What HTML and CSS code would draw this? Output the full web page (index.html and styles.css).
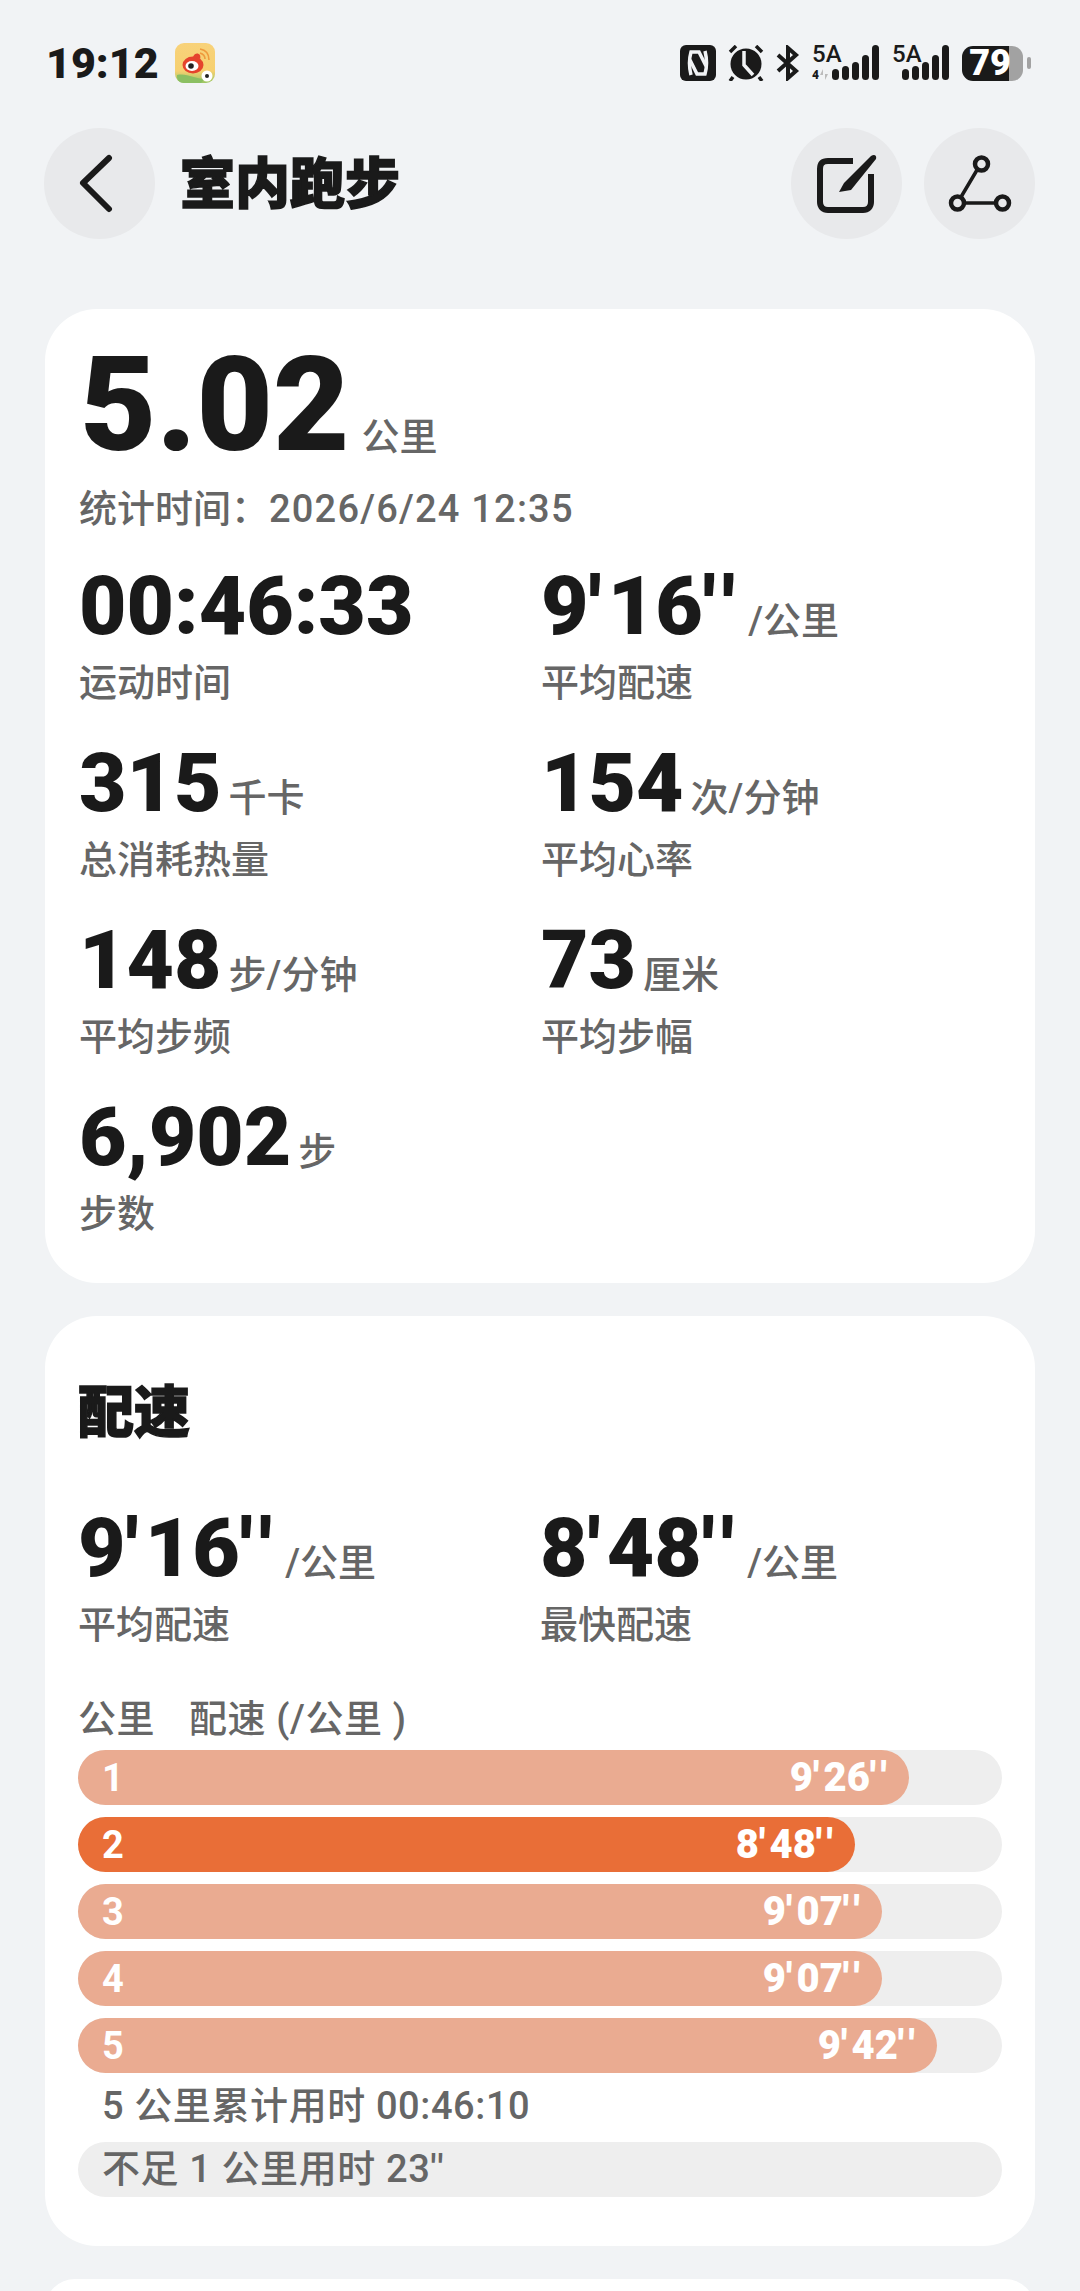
FILE: index.html
```html
<!DOCTYPE html>
<html>
<head>
  <title>室内跑步</title>
  <link rel="stylesheet" href="styles.css">
</head>
<body>

  <div class="status-bar">
    <div class="status-left">
      <span class="clock">19:12</span>
      <svg class="app-icon" width="40" height="40" viewBox="0 0 40 40">
        <defs>
          <linearGradient id="appBg" x1="0" y1="0" x2="0" y2="1">
            <stop offset="0" stop-color="#f8d27a"/>
            <stop offset="0.7" stop-color="#f6d070"/>
            <stop offset="1" stop-color="#9cc765"/>
          </linearGradient>
        </defs>
        <rect width="40" height="40" rx="9" fill="url(#appBg)"/>
        <ellipse cx="18" cy="22" rx="10.5" ry="8.5" fill="#e5432d"/>
        <path d="M18 14 C20 8 27 10 25 16" fill="#e5432d"/>
        <ellipse cx="17" cy="23" rx="6.5" ry="5" fill="#fff"/>
        <circle cx="16" cy="23" r="2.8" fill="#222"/>
        <path d="M25 6 C31 7 34 11 34 17 M25 10 C28 11 30 13 30 16" stroke="#ef9a3c" stroke-width="1.6" fill="none"/>
        <path d="M2 32 C12 30 20 36 30 36 L26 40 H9 C5 40 2 37 2 34 Z" fill="#8bbf62"/>
        <circle cx="32" cy="33" r="5.5" fill="#fff"/>
        <circle cx="32" cy="33" r="2" fill="#222"/>
      </svg>
    </div>
    <div class="status-right">
      <svg width="36" height="36" viewBox="0 0 36 36">
        <rect width="36" height="36" rx="6" fill="#1a1a1a"/>
        <path d="M11 30 C9 22 9 14 11 7 H19 L26 21" stroke="#f1f3f5" stroke-width="3.5" fill="none"/>
        <path d="M25 6 C27 14 27 22 25 29 H17 L10 15" stroke="#f1f3f5" stroke-width="3.5" fill="none"/>
      </svg>
      <svg width="36" height="36" viewBox="0 0 36 36">
        <circle cx="18" cy="19" r="15.5" fill="#1a1a1a"/>
        <path d="M2 7 L8 1 M34 7 L28 1 M5 32 L2 36 M31 32 L34 36" stroke="#1a1a1a" stroke-width="3.5"/>
        <path d="M16 6 V20 L25 30" stroke="#f1f3f5" stroke-width="3.5" fill="none"/>
      </svg>
      <svg width="24" height="36" viewBox="0 0 24 36">
        <path d="M2 10 L20 26 L12 33 V3 L20 10 L2 26" stroke="#1a1a1a" stroke-width="4" fill="none"/>
      </svg>
      <div class="signal">
        <span class="signal-label">5A</span>
        <span class="signal-small">4</span>
        <svg class="signal-arrow" width="8" height="11" viewBox="0 0 8 11">
          <path d="M3 0 L0 6 H3 Z M5 11 L8 5 H5 Z" fill="#bbb"/>
        </svg>
        <svg width="48" height="36" viewBox="0 0 48 36">
          <rect x="0" y="24" width="7" height="11" rx="3.5" fill="#1a1a1a"/>
          <rect x="10" y="21" width="7" height="14" rx="3.5" fill="#1a1a1a"/>
          <rect x="20" y="17" width="7" height="18" rx="3.5" fill="#1a1a1a"/>
          <rect x="30" y="10" width="7" height="25" rx="3.5" fill="#1a1a1a"/>
          <rect x="40" y="0" width="7" height="35" rx="3.5" fill="#1a1a1a"/>
        </svg>
      </div>
      <div class="signal signal-second">
        <span class="signal-label">5A</span>
        <svg width="48" height="36" viewBox="0 0 48 36">
          <rect x="0" y="24" width="7" height="11" rx="3.5" fill="#1a1a1a"/>
          <rect x="10" y="21" width="7" height="14" rx="3.5" fill="#1a1a1a"/>
          <rect x="20" y="17" width="7" height="18" rx="3.5" fill="#1a1a1a"/>
          <rect x="30" y="10" width="7" height="25" rx="3.5" fill="#1a1a1a"/>
          <rect x="40" y="0" width="7" height="35" rx="3.5" fill="#1a1a1a"/>
        </svg>
      </div>
      <div class="battery">
        <div class="battery-body"><span>79</span></div>
        <div class="battery-tip"></div>
      </div>
    </div>
  </div>

  <div class="header">
    <div class="round-btn btn-back">
      <svg width="34" height="60" viewBox="0 0 34 60">
        <path d="M30 4 L4 29 L30 55" stroke="#1a1a1a" stroke-width="6" stroke-linecap="round" stroke-linejoin="round" fill="none"/>
      </svg>
    </div>
    <h1>室内跑步</h1>
    <div class="round-btn">
      <svg width="64" height="60" viewBox="0 0 64 60">
        <path d="M38 7 H13 C7 7 5 10 5 15 V48 C5 53 8 56 13 56 H48 C53 56 56 53 56 48 V20" stroke="#1a1a1a" stroke-width="6" fill="none"/>
        <path d="M29 29 L56 2 C59 0 62 1 61 5 L36 36 L24 38 Z" fill="#1a1a1a"/>
      </svg>
    </div>
    <div class="round-btn">
      <svg width="64" height="60" viewBox="0 0 64 60">
        <circle cx="33.5" cy="10" r="6.5" stroke="#1a1a1a" stroke-width="4.5" fill="none"/>
        <circle cx="9.5" cy="49" r="6.5" stroke="#1a1a1a" stroke-width="4.5" fill="none"/>
        <circle cx="54.5" cy="49" r="6.5" stroke="#1a1a1a" stroke-width="4.5" fill="none"/>
        <path d="M29 16 L13 43 M17 49 H47" stroke="#1a1a1a" stroke-width="3.5" fill="none"/>
      </svg>
    </div>
  </div>

  <div class="card card-summary">
    <div class="total"><span class="total-num">5.02</span><span class="unit total-unit">公里</span></div>
    <div class="label stat-time">统计时间：<span class="date">2026/6/24 12:35</span></div>
    <div class="stats">
      <div class="stat">
        <div class="value"><span class="num">00:46:33</span></div>
        <div class="label">运动时间</div>
      </div>
      <div class="stat">
        <div class="value"><span class="num">9<span class="mark">'</span>16<span class="mark">''</span></span><span class="unit">/公里</span></div>
        <div class="label">平均配速</div>
      </div>
      <div class="stat">
        <div class="value"><span class="num">315</span><span class="unit">千卡</span></div>
        <div class="label">总消耗热量</div>
      </div>
      <div class="stat">
        <div class="value"><span class="num">154</span><span class="unit">次/分钟</span></div>
        <div class="label">平均心率</div>
      </div>
      <div class="stat">
        <div class="value"><span class="num">148</span><span class="unit">步/分钟</span></div>
        <div class="label">平均步频</div>
      </div>
      <div class="stat">
        <div class="value"><span class="num">73</span><span class="unit">厘米</span></div>
        <div class="label">平均步幅</div>
      </div>
      <div class="stat">
        <div class="value"><span class="num">6,902</span><span class="unit">步</span></div>
        <div class="label">步数</div>
      </div>
    </div>
  </div>

  <div class="card card-pace">
    <h2>配速</h2>
    <div class="stats">
      <div class="stat">
        <div class="value"><span class="num">9<span class="mark">'</span>16<span class="mark">''</span></span><span class="unit">/公里</span></div>
        <div class="label">平均配速</div>
      </div>
      <div class="stat">
        <div class="value"><span class="num">8<span class="mark">'</span>48<span class="mark">''</span></span><span class="unit">/公里</span></div>
        <div class="label">最快配速</div>
      </div>
    </div>
    <div class="label wide table-head"><span class="col-km">公里</span>配速 (/公里 )</div>
    <div class="bars">
      <div class="bar"><div class="fill" style="width: 831px"><span class="km">1</span><span>9<span class="mark">'</span>26<span class="mark">''</span></span></div></div>
      <div class="bar"><div class="fill fastest" style="width: 777px"><span class="km">2</span><span>8<span class="mark">'</span>48<span class="mark">''</span></span></div></div>
      <div class="bar"><div class="fill" style="width: 804px"><span class="km">3</span><span>9<span class="mark">'</span>07<span class="mark">''</span></span></div></div>
      <div class="bar"><div class="fill" style="width: 804px"><span class="km">4</span><span>9<span class="mark">'</span>07<span class="mark">''</span></span></div></div>
      <div class="bar"><div class="fill" style="width: 859px"><span class="km">5</span><span>9<span class="mark">'</span>42<span class="mark">''</span></span></div></div>
    </div>
    <div class="label wide total-time">5 公里累计用时 00:46:10</div>
    <div class="label wide rest-time">不足 1 公里用时 23''</div>
  </div>

  <div class="card card-next"></div>

</body>
</html>
```

FILE: styles.css
```css
html, body {
  margin: 0;
  height: 2291px;
  overflow: hidden;
}

body {
  background: #f1f3f5;
  color: #1a1a1a;
  font-family: Roboto, "Noto Sans CJK SC", sans-serif;
}

/* Status bar */
.status-bar {
  display: flex;
  justify-content: space-between;
  align-items: center;
  height: 40px;
  padding: 43px 49px 0 46px;
}

.status-left {
  display: flex;
  align-items: center;
  gap: 16px;
}

.clock {
  font-size: 43px;
  font-weight: 900;
  line-height: 40px;
}

.status-right {
  display: flex;
  align-items: center;
  gap: 12px;
}

.signal {
  position: relative;
  display: flex;
  align-items: flex-end;
  justify-content: flex-end;
  width: 68px;
  height: 36px;
}

.signal-second {
  width: 58px;
}

.signal-label {
  position: absolute;
  left: 0;
  top: -3px;
  font-size: 24px;
  font-weight: 500;
  line-height: 24px;
}

.signal-small {
  position: absolute;
  left: 0;
  bottom: 0;
  font-size: 12px;
  font-weight: 900;
  line-height: 12px;
}

.signal-arrow {
  position: absolute;
  left: 8px;
  bottom: 1px;
}

.battery {
  display: flex;
  align-items: center;
  gap: 4px;
}

.battery-body {
  width: 61px;
  height: 35px;
  border-radius: 11px;
  background: linear-gradient(to right, #1a1a1a 77%, #a2a2a2 77%);
  color: #fff;
  font-size: 36px;
  font-weight: 900;
  line-height: 35px;
  text-align: center;
}

.battery-body span {
  margin-right: 5px;
}

.battery-tip {
  width: 4px;
  height: 12px;
  border-radius: 2px;
  background: #a2a2a2;
}

/* Header */
.header {
  display: flex;
  align-items: center;
  height: 111px;
  margin-top: 45px;
  padding: 0 45px 0 44px;
}

.round-btn {
  display: flex;
  justify-content: center;
  align-items: center;
  width: 111px;
  height: 111px;
  margin-left: 22px;
  border-radius: 50%;
  background: #e8e9eb;
  flex-shrink: 0;
}

.btn-back {
  margin-left: 0;
  padding-right: 8px;
  box-sizing: border-box;
}

.header h1 {
  flex: 1;
  margin: 0 0 0 25px;
  font-size: 55px;
  font-weight: 900;
  line-height: 60px;
  -webkit-text-stroke: 1.5px #1a1a1a;
}

/* Cards */
.card {
  margin: 0 45px;
  background: white;
  border-radius: 52px;
}

.card-summary {
  height: 974px;
  margin-top: 70px;
  padding: 0 34px;
}

.card-pace {
  height: 930px;
  margin-top: 33px;
  padding: 0 33px;
}

.card-next {
  height: 60px;
  margin-top: 33px;
}

.total {
  display: flex;
  align-items: baseline;
  height: 128px;
  padding-top: 32px;
}

.total-num {
  margin-left: 1px;
  font-size: 132px;
  font-weight: 900;
  line-height: 128px;
}

.unit {
  margin-left: 7px;
  color: #666;
  font-size: 38px;
  font-weight: 500;
}

.total-unit {
  margin-left: 12px;
}

.label {
  color: #666;
  font-size: 38px;
  font-weight: 500;
  line-height: 48px;
}

.wide {
  font-kerning: none;
  letter-spacing: 0.6px;
}

.date {
  letter-spacing: 1.2px;
}

.stat-time {
  margin-top: 16px;
}

.stats {
  display: grid;
  grid-template-columns: 462px 1fr;
  row-gap: 33px;
  margin-top: 30px;
}

.value {
  display: flex;
  align-items: baseline;
  height: 86px;
}

.num {
  font-size: 82px;
  font-weight: 900;
  line-height: 86px;
  font-kerning: none;
}

.mark {
  letter-spacing: 0.08em;
}

.stat .label {
  margin-top: 10px;
}

/* Pace */
.card-pace h2 {
  margin: 0;
  padding-top: 62px;
  font-size: 56px;
  font-weight: 900;
  line-height: 70px;
  -webkit-text-stroke: 1.5px #1a1a1a;
}

.card-pace .stats {
  margin-top: 57px;
}

.table-head {
  margin-top: 46px;
}

.col-km {
  display: inline-block;
  width: 111px;
}

.bars {
  display: flex;
  flex-direction: column;
  gap: 12px;
  margin-top: 7px;
}

.bar {
  height: 55px;
  border-radius: 28px;
  background: #eeeeee;
}

.fill {
  display: flex;
  justify-content: space-between;
  align-items: center;
  box-sizing: border-box;
  height: 55px;
  padding: 0 18px 0 24px;
  border-radius: 28px;
  background: #eaab91;
  color: white;
  font-size: 40px;
  font-weight: 900;
  font-kerning: none;
}

.fill .mark {
  letter-spacing: 0.11em;
}

.km {
  font-size: 38px;
  font-weight: 700;
}

.fastest {
  background: #e96e37;
}

.total-time {
  margin-top: 9px;
  padding-left: 24px;
}

.rest-time {
  height: 55px;
  margin-top: 12px;
  padding-left: 24px;
  border-radius: 28px;
  background: #eeeeee;
  line-height: 55px;
}
```
